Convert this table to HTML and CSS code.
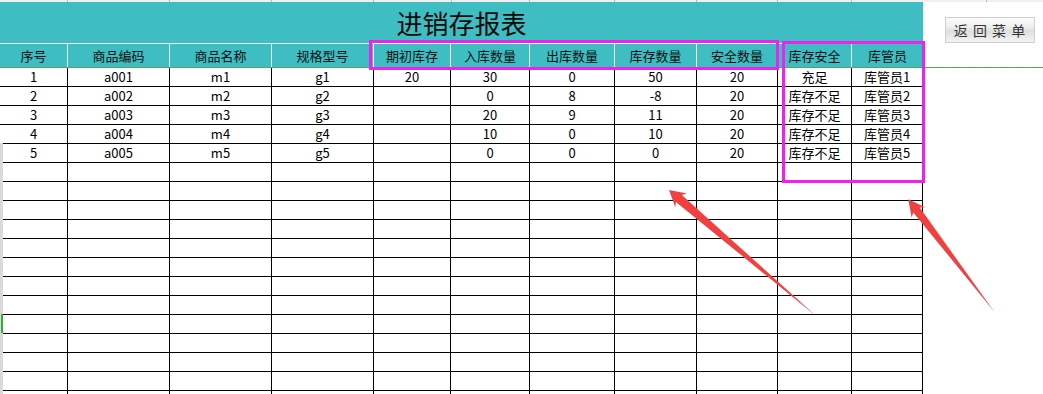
FILE: index.html
```html
<!DOCTYPE html>
<html lang="zh-CN">
<head>
<meta charset="utf-8">
<title>进销存报表</title>
<link rel="stylesheet" href="styles.css">
</head>
<body>
<div class="topband">
  <span class="tb" style="width:68px"></span><span class="tb" style="width:102px"></span><span class="tb" style="width:102px"></span><span class="tb" style="width:102px"></span><span class="tb" style="width:78px"></span><span class="tb" style="width:78px"></span><span class="tb" style="width:85px"></span><span class="tb" style="width:82px"></span><span class="tb" style="width:81px"></span><span class="tb" style="width:74px"></span><span class="tb" style="width:135px"></span>
</div>
<div class="main">
  <div class="sheet">
    <div class="title">进销存报表</div>
    <div class="grid head">
      <div class="hc">序号</div><div class="hc">商品编码</div><div class="hc">商品名称</div><div class="hc">规格型号</div><div class="hc">期初库存</div><div class="hc">入库数量</div><div class="hc">出库数量</div><div class="hc">库存数量</div><div class="hc">安全数量</div><div class="hc">库存安全</div><div class="hc last">库管员</div>
    </div>
    <div class="grid body">
      <div class="c">1</div><div class="c">a001</div><div class="c">m1</div><div class="c">g1</div><div class="c">20</div><div class="c">30</div><div class="c">0</div><div class="c">50</div><div class="c">20</div><div class="c">充足</div><div class="c">库管员1</div>
      <div class="c">2</div><div class="c">a002</div><div class="c">m2</div><div class="c">g2</div><div class="c"></div><div class="c">0</div><div class="c">8</div><div class="c">-8</div><div class="c">20</div><div class="c">库存不足</div><div class="c">库管员2</div>
      <div class="c">3</div><div class="c">a003</div><div class="c">m3</div><div class="c">g3</div><div class="c"></div><div class="c">20</div><div class="c">9</div><div class="c">11</div><div class="c">20</div><div class="c">库存不足</div><div class="c">库管员3</div>
      <div class="c">4</div><div class="c">a004</div><div class="c">m4</div><div class="c">g4</div><div class="c"></div><div class="c">10</div><div class="c">0</div><div class="c">10</div><div class="c">20</div><div class="c">库存不足</div><div class="c">库管员4</div>
      <div class="c">5</div><div class="c">a005</div><div class="c">m5</div><div class="c">g5</div><div class="c"></div><div class="c">0</div><div class="c">0</div><div class="c">0</div><div class="c">20</div><div class="c">库存不足</div><div class="c">库管员5</div>
      <div class="c"></div><div class="c"></div><div class="c"></div><div class="c"></div><div class="c"></div><div class="c"></div><div class="c"></div><div class="c"></div><div class="c"></div><div class="c"></div><div class="c"></div>
      <div class="c"></div><div class="c"></div><div class="c"></div><div class="c"></div><div class="c"></div><div class="c"></div><div class="c"></div><div class="c"></div><div class="c"></div><div class="c"></div><div class="c"></div>
      <div class="c"></div><div class="c"></div><div class="c"></div><div class="c"></div><div class="c"></div><div class="c"></div><div class="c"></div><div class="c"></div><div class="c"></div><div class="c"></div><div class="c"></div>
      <div class="c"></div><div class="c"></div><div class="c"></div><div class="c"></div><div class="c"></div><div class="c"></div><div class="c"></div><div class="c"></div><div class="c"></div><div class="c"></div><div class="c"></div>
      <div class="c"></div><div class="c"></div><div class="c"></div><div class="c"></div><div class="c"></div><div class="c"></div><div class="c"></div><div class="c"></div><div class="c"></div><div class="c"></div><div class="c"></div>
      <div class="c"></div><div class="c"></div><div class="c"></div><div class="c"></div><div class="c"></div><div class="c"></div><div class="c"></div><div class="c"></div><div class="c"></div><div class="c"></div><div class="c"></div>
      <div class="c"></div><div class="c"></div><div class="c"></div><div class="c"></div><div class="c"></div><div class="c"></div><div class="c"></div><div class="c"></div><div class="c"></div><div class="c"></div><div class="c"></div>
      <div class="c"></div><div class="c"></div><div class="c"></div><div class="c"></div><div class="c"></div><div class="c"></div><div class="c"></div><div class="c"></div><div class="c"></div><div class="c"></div><div class="c"></div>
      <div class="c"></div><div class="c"></div><div class="c"></div><div class="c"></div><div class="c"></div><div class="c"></div><div class="c"></div><div class="c"></div><div class="c"></div><div class="c"></div><div class="c"></div>
      <div class="c"></div><div class="c"></div><div class="c"></div><div class="c"></div><div class="c"></div><div class="c"></div><div class="c"></div><div class="c"></div><div class="c"></div><div class="c"></div><div class="c"></div>
      <div class="c"></div><div class="c"></div><div class="c"></div><div class="c"></div><div class="c"></div><div class="c"></div><div class="c"></div><div class="c"></div><div class="c"></div><div class="c"></div><div class="c"></div>
      <div class="c"></div><div class="c"></div><div class="c"></div><div class="c"></div><div class="c"></div><div class="c"></div><div class="c"></div><div class="c"></div><div class="c"></div><div class="c"></div><div class="c"></div>
      <div class="c"></div><div class="c"></div><div class="c"></div><div class="c"></div><div class="c"></div><div class="c"></div><div class="c"></div><div class="c"></div><div class="c"></div><div class="c"></div><div class="c"></div>
    </div>
  </div>
  <div class="side">
    <button class="menu-btn" type="button">返 回 菜 单</button>
  </div>
</div>

<div class="rowstrip"><span class="rowmark"></span></div>
<div class="hl hl-a"></div>
<div class="hl hl-b"></div>
<svg class="arrows" width="1043" height="394" viewBox="0 0 1043 394" xmlns="http://www.w3.org/2000/svg">
  <polygon points="669,190 687,193.6 681.8,195 816,316 675.9,201.9 675.3,207.2" fill="#f23f3f"/>
  <polygon points="908.3,199.3 925.1,207.2 919.7,207.6 994.3,311.7 913.3,212.5 911.6,217.6" fill="#f23f3f"/>
</svg>
</body>
</html>
```

FILE: styles.css
```css
* { box-sizing: border-box; }
html, body {
  margin: 0;
  padding: 0;
  background: #ffffff;
}
body {
  width: 1043px;
  height: 394px;
  overflow: hidden;
  position: relative;
  font-family: "Noto Sans CJK SC", "Noto Sans", sans-serif;
  color: #000;
}
.topband {
  display: flex;
  height: 2px;
  background: #f0f0f0;
}
.tb {
  display: block;
  height: 2px;
  border-right: 1px solid #b8b8b8;
  flex: none;
}
.main {
  display: flex;
}
.sheet {
  width: 923px;
  flex: none;
}
.title {
  height: 42px;
  background: #3ebdc2;
  border-bottom: 1px solid #ffffff;
  font-size: 26px;
  line-height: 41px;
  text-align: center;
  color: #0a0a0a;
}
.grid {
  display: grid;
  grid-template-columns: 68px 102px 102px 102px 77px 79px 85px 82px 81px 74px 71px;
}
.head {
  border-bottom: 1px solid #55a855;
  background: #3ebdc2;
}
.hc {
  height: 23px;
  line-height: 23px;
  font-size: 13px;
  text-align: center;
  border-right: 1px solid #ffffff;
  color: #111;
}
.hc.last { border-right: none; }
.c {
  height: 19px;
  line-height: 18px;
  font-size: 13px;
  text-align: center;
  border-right: 1px solid #000;
  border-bottom: 1px solid #000;
  white-space: nowrap;
}
.side {
  flex: 1;
  height: 66px;
  border-bottom: 1px solid #55a855;
  padding: 15px 0 0 22px;
}
.menu-btn {
  display: block;
  width: 90px;
  height: 26px;
  margin: 0;
  padding: 0;
  border: 1px solid #cfcfcf;
  background: linear-gradient(#fbfbfb 0%, #f0f0f0 35%, #dedede 55%, #f3f3f3 100%);
  font-family: "Noto Sans CJK SC", sans-serif;
  font-size: 14px;
  letter-spacing: 1px;
  color: #333;
  text-align: center;
  line-height: 24px;
}
.rowstrip {
  position: absolute;
  left: 0;
  top: 143px;
  width: 3px;
  height: 251px;
  background: #dadada;
}
.rowmark {
  position: absolute;
  left: 1px;
  top: 171px;
  width: 2px;
  height: 19px;
  background: #3fa33f;
}
.hl {
  position: absolute;
  border: 3px solid #ee22ee;
}
.hl-a {
  left: 369px;
  top: 40px;
  width: 410px;
  height: 30px;
}
.hl-b {
  left: 782px;
  top: 41px;
  width: 143px;
  height: 142px;
}
.arrows {
  position: absolute;
  left: 0;
  top: 0;
  pointer-events: none;
}
```
